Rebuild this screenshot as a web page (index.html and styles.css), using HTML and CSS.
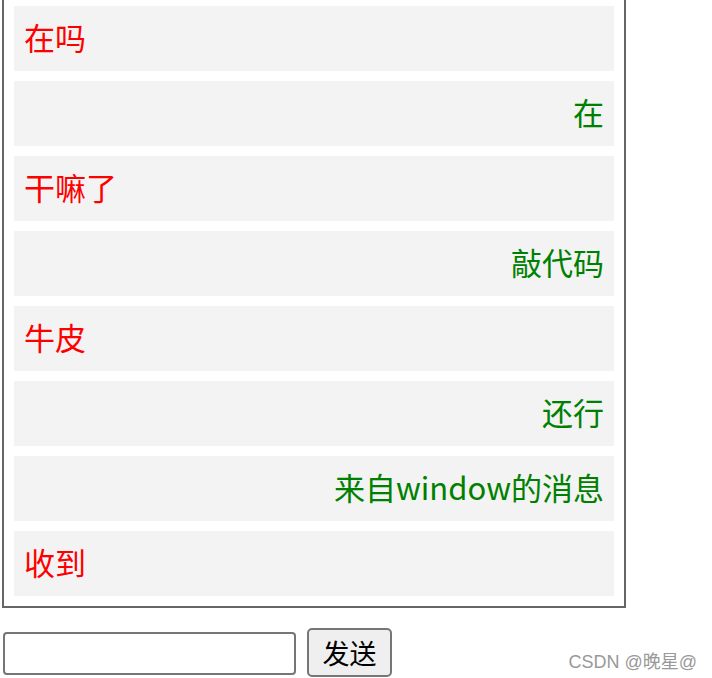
FILE: index.html
```html
<!DOCTYPE html>
<html lang="zh-CN">
<head>
    <meta charset="UTF-8">
    <title>聊天</title>
    <link rel="stylesheet" href="styles.css">
</head>
<body>
    <div class="chat-box">
        <div class="msg left">在吗</div>
        <div class="msg right">在</div>
        <div class="msg left">干嘛了</div>
        <div class="msg right">敲代码</div>
        <div class="msg left">牛皮</div>
        <div class="msg right">还行</div>
        <div class="msg right">来自window的消息</div>
        <div class="msg left">收到</div>
    </div>
    <div class="send-bar">
        <input type="text" class="msg-input">
        <button class="send-btn">发送</button>
    </div>
    <div class="watermark">CSDN @晚星@</div>
</body>
</html>
```

FILE: styles.css
```css
* {
    box-sizing: border-box;
}

body {
    margin: 0;
    padding: 0 0 0 2px;
    font-family: "Noto Sans CJK SC", "Noto Sans", sans-serif;
    background: #fff;
}

.chat-box {
    width: 624px;
    border: 2px solid #666;
    border-top: none;
    padding: 6px 10px 0 10px;
}

.msg {
    height: 65px;
    line-height: 61px;
    margin-bottom: 10px;
    padding: 0 10px;
    background: #f3f3f3;
    font-size: 31px;
}

.msg.left {
    color: red;
    text-align: left;
}

.msg.right {
    color: green;
    text-align: right;
}

.send-bar {
    display: flex;
    align-items: flex-end;
    gap: 11px;
    margin-top: 20px;
}

.msg-input {
    width: 293px;
    height: 43px;
    margin: 0 0 2px 1px;
    border: 2px solid #767676;
    border-radius: 4px;
    font-size: 26px;
    padding: 0 4px;
}

.send-btn {
    width: 85px;
    height: 49px;
    font-family: "Noto Sans CJK SC", sans-serif;
    font-size: 27px;
    color: #000;
    background: #efefef;
    border: 2px solid #767676;
    border-radius: 5px;
    padding: 0;
}

.watermark {
    position: absolute;
    right: 15px;
    top: 647px;
    color: #999;
    font-size: 18px;
    font-family: "Liberation Sans", "Noto Sans CJK SC", sans-serif;
}
```
